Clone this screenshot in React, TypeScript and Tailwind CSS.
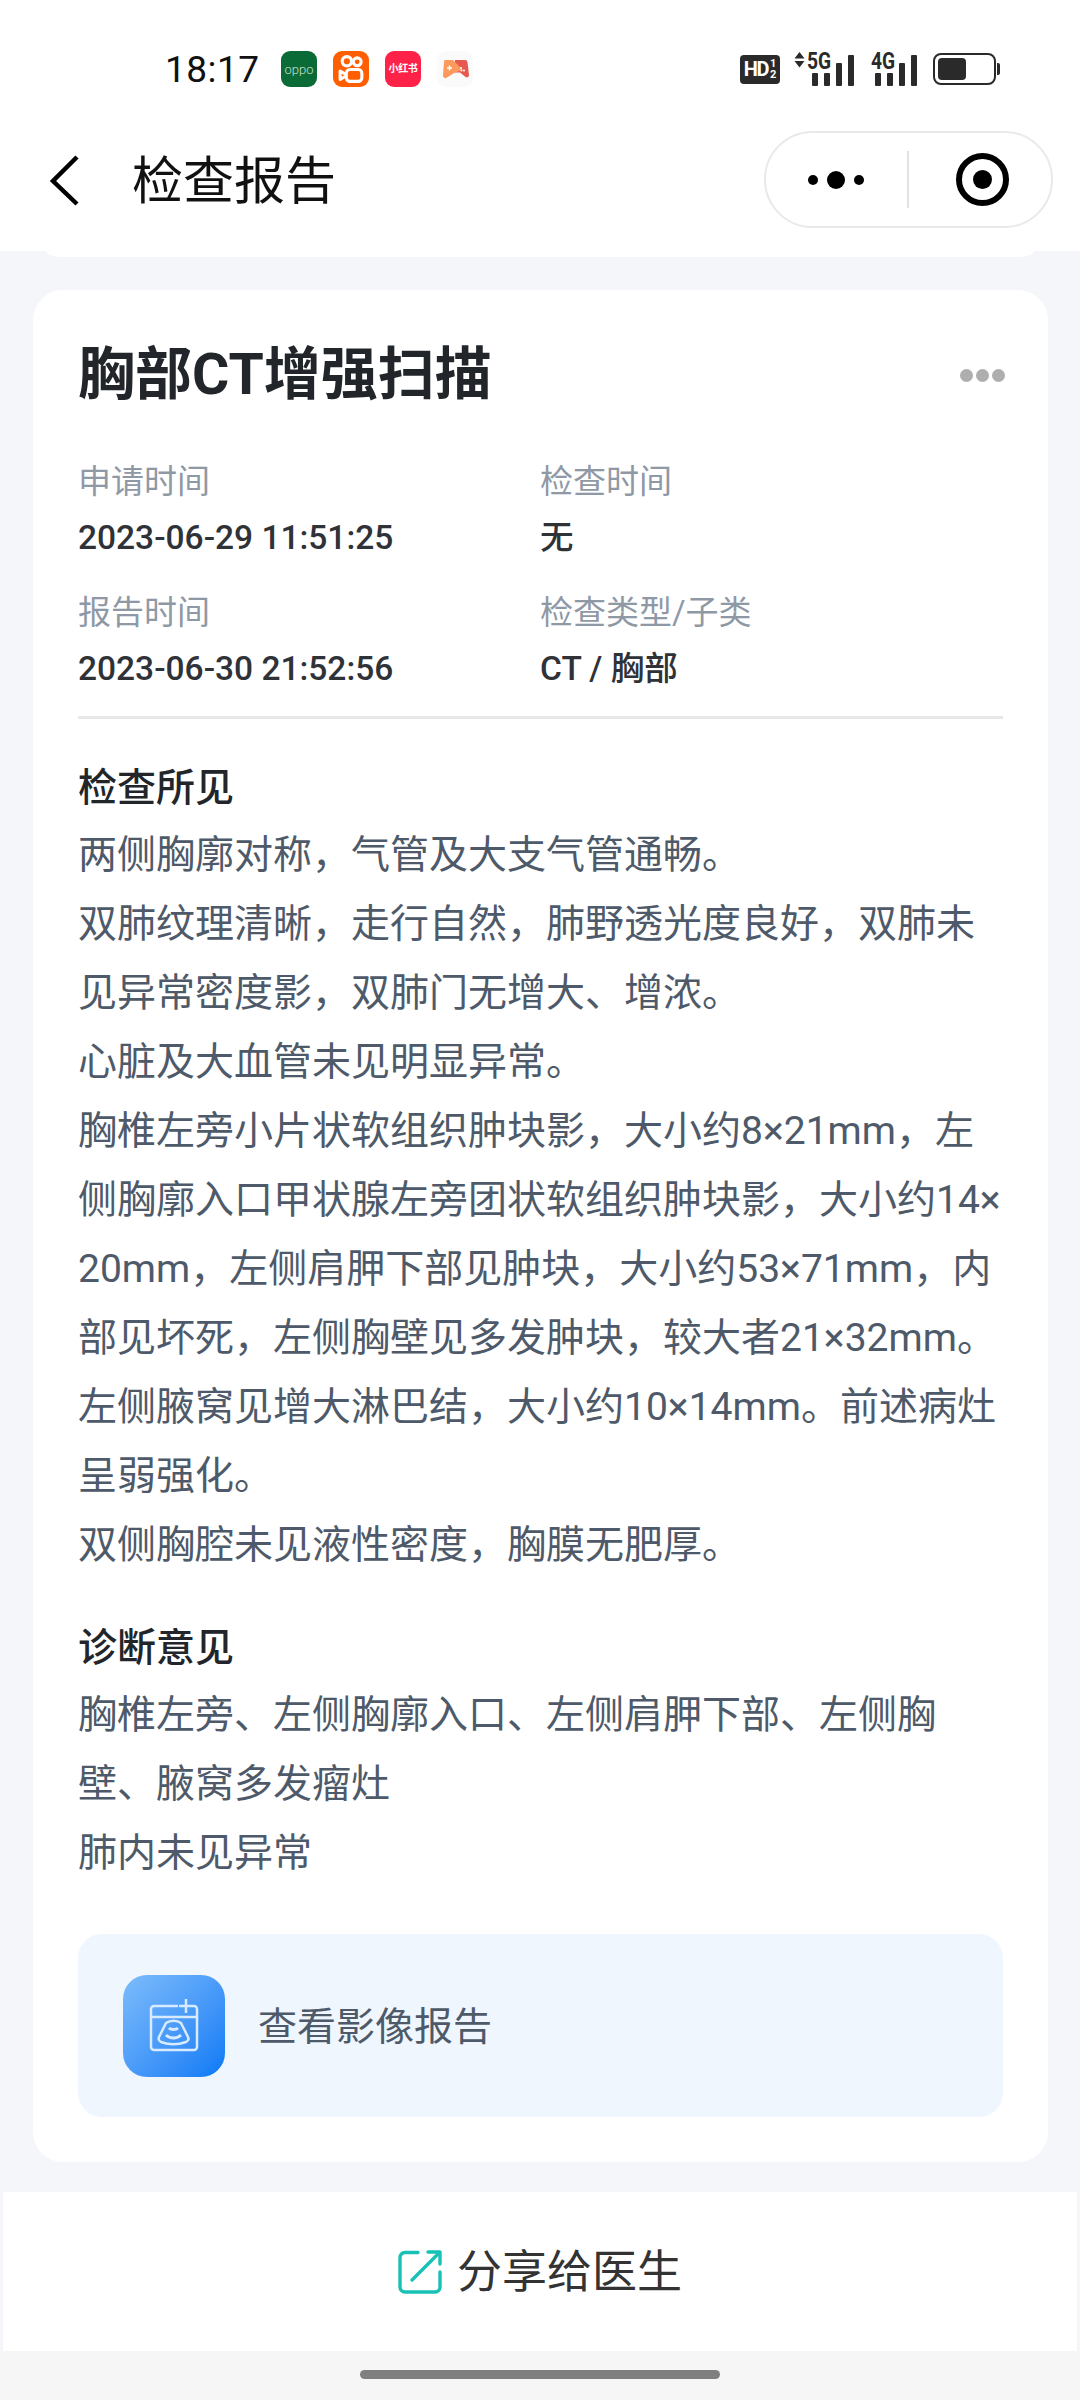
const sans = "font-['Roboto','Noto_Sans_CJK_SC',sans-serif]";

function OppoIcon() {
  return (
    <div className="flex h-[36px] w-[36px] items-center justify-center rounded-[9px] bg-[#0b6b36]">
      <span className="font-['Lato',sans-serif] text-[13px] font-light leading-none text-[#e3f3e8]">oppo</span>
    </div>
  );
}

function KuaishouIcon() {
  return (
    <div className="flex h-[36px] w-[36px] items-center justify-center rounded-[9px] bg-[#ff5f00]">
      <svg width="28" height="30" viewBox="0 0 27 29" fill="none" stroke="#fff" strokeWidth="3">
        <circle cx="9.5" cy="7" r="4.5" />
        <circle cx="19.5" cy="7.5" r="3.8" />
        <rect x="9" y="15" width="15" height="11.5" rx="3.5" />
        <path d="M9 20 3 16.5v8L9 21" strokeLinejoin="round" />
      </svg>
    </div>
  );
}

function RedBookIcon() {
  return (
    <div className="flex h-[36px] w-[36px] items-center justify-center rounded-[9px] bg-[#fe2249]">
      <span className="whitespace-nowrap text-[10px] font-bold leading-none tracking-[-0.4px] text-white">小红书</span>
    </div>
  );
}

function GameIcon() {
  return (
    <div className="flex h-[36px] w-[36px] items-center justify-center rounded-[9px] bg-[#fafafa]">
      <svg width="27" height="20" viewBox="0 0 27 20">
        <path d="M4 1h19a2.500 2.500 0 0 1 2.500 2.200L27 16a2.200 2.200 0 0 1-3.400 2L18 13.500H13V1z" fill="#e5594f" />
        <path d="M3 1h8l10 10-8 2.500-8 5a2.400 2.400 0 0 1-4-2L2 3a2.300 2.300 0 0 1 1-2z" fill="#fb9a5c" />
        <path d="M5 9h5M7.500 6.500v5" stroke="#fff" strokeWidth="1.4" />
        <circle cx="19" cy="9" r="1" fill="#fff" />
        <circle cx="22" cy="11.500" r="1" fill="#fff" />
        <circle cx="19.500" cy="11.500" r="0.9" fill="#fff" />
      </svg>
    </div>
  );
}

function SignalBars({ heights }: { heights: number[] }) {
  return (
    <div className="flex items-end gap-[6px]">
      {heights.map((h, i) => (
        <div key={i} className="w-[6px] rounded-[1px] bg-[#2a2a2a]" style={{ height: h }} />
      ))}
    </div>
  );
}

function StatusBar() {
  return (
    <div className="flex h-[88px] items-end pb-[1px] pl-[165px] pr-[80px]">
      <div className="flex h-[36px] flex-1 items-center">
        <span className="w-[116px] font-['Roboto',sans-serif] text-[37px] leading-none tracking-[0.5px] text-[#111]">18:17</span>
        <div className="flex gap-[16px]">
          <OppoIcon />
          <KuaishouIcon />
          <RedBookIcon />
          <GameIcon />
        </div>
      </div>
      <div className="flex h-[36px] items-center">
        <div className="flex h-[29px] w-[40px] items-center justify-center rounded-[4px] bg-[#2a2a2a] font-['Roboto',sans-serif] text-white">
          <span className="text-[20px] font-bold leading-none tracking-[-1.5px]">HD</span>
          <span className="ml-[2px] flex flex-col text-[11px] font-bold leading-[11px]">
            <span>1</span>
            <span>2</span>
          </span>
        </div>
        <div className="relative ml-[14px] h-[34px] w-[60px]">
          <svg className="absolute left-0 top-0" width="11" height="16" viewBox="0 0 11 16" fill="#2a2a2a">
            <path d="M5.500 0 10.500 6.500H.5zM.5 9h10l-5 6.500z" />
          </svg>
          <span className="absolute left-[13px] top-[-3px] origin-left scale-x-[0.8] font-['Roboto',sans-serif] text-[24px] font-bold leading-[24px] text-[#2a2a2a]">5G</span>
          <div className="absolute bottom-0 right-0">
            <SignalBars heights={[13, 13, 23, 31]} />
          </div>
        </div>
        <div className="relative ml-[17px] h-[34px] w-[46px]">
          <span className="absolute left-0 top-[-3px] origin-left scale-x-[0.8] font-['Roboto',sans-serif] text-[24px] font-bold leading-[24px] text-[#2a2a2a]">4G</span>
          <div className="absolute bottom-0 right-0">
            <SignalBars heights={[13, 13, 23, 31]} />
          </div>
        </div>
        <div className="ml-[16px] flex items-center">
          <div className="h-[32px] w-[63px] rounded-[8px] border-[2px] border-[#2a2a2a] p-[3px]">
            <div className="h-full w-[28px] rounded-[4px] bg-[#2a2a2a]" />
          </div>
          <div className="ml-[1px] h-[12px] w-[3px] rounded-r-[2px] bg-[#2a2a2a]" />
        </div>
      </div>
    </div>
  );
}

function NavBar() {
  return (
    <div className="flex h-[163px] items-start pl-[49px] pr-[27px] pt-[43px]">
      <svg className="mt-[23px]" width="32" height="52" viewBox="0 0 32 52" fill="none" stroke="#000" strokeWidth="4.500">
        <path d="M28 3 4 27l24 23" />
      </svg>
      <h1 className={`ml-[51px] mt-[18px] text-[51px] font-normal leading-[66px] text-[#111] ${sans}`}>检查报告</h1>
      <div className="ml-auto flex h-[97px] w-[289px] items-center rounded-full border-[2px] border-[#e9e9e9] bg-white">
        <div className="flex w-[141px] items-center justify-center gap-[9px] pr-[2px]">
          <div className="h-[10px] w-[10px] rounded-full bg-black" />
          <div className="h-[18px] w-[18px] rounded-full bg-black" />
          <div className="h-[10px] w-[10px] rounded-full bg-black" />
        </div>
        <div className="h-[57px] w-[2px] bg-[#e2e2e2]" />
        <div className="flex flex-1 items-center justify-center pl-[4px]">
          <div className="flex h-[53px] w-[53px] items-center justify-center rounded-full border-[6px] border-black">
            <div className="h-[19px] w-[19px] rounded-full bg-black" />
          </div>
        </div>
      </div>
    </div>
  );
}

function InfoCell({ label, value }: { label: string; value: string }) {
  return (
    <div>
      <div className="text-[33px] leading-[44px] text-[#8f99a5]">{label}</div>
      <div className="mt-[12px] h-[44px] text-[33.5px] font-medium leading-[44px] text-[#2f3237]">{value}</div>
    </div>
  );
}

function ScanIcon() {
  return (
    <div className="flex h-[102px] w-[102px] items-center justify-center rounded-[24px] bg-gradient-to-br from-[#7cbcfb] to-[#0079f5]">
      <svg width="50" height="56" viewBox="0 0 50 56" fill="none" stroke="#d8ebfe" strokeWidth="2.500">
        <path d="M29 8H5a3 3 0 0 0-3 3v38a3 3 0 0 0 3 3h40a3 3 0 0 0 3-3V11a3 3 0 0 0-3-3h-1" />
        <path d="M2 19h46" />
        <path d="M37 1v14M30 8h14" />
        <path d="M17 25c4-3 11-3 15 0l7 14c1 2 0 4-2 5-8 3-17 3-25 0-2-1-3-3-2-5z" />
        <path d="M17 37c4 4 11 4 15 0" strokeWidth="3" />
        <path d="M20 30c2 2 7 2 9 0" strokeWidth="3" />
      </svg>
    </div>
  );
}

function ShareIcon() {
  return (
    <svg width="44" height="44" viewBox="0 0 44 44" fill="none" stroke="#18c1b6" strokeWidth="3.400" strokeLinecap="round" strokeLinejoin="round">
      <path d="M20 2.500H7a5 5 0 0 0-5 5V37a5 5 0 0 0 5 5h30a5 5 0 0 0 5-5V22" />
      <path d="M14 30 41 3" />
      <path d="M30 2h12v12" />
    </svg>
  );
}

const findings = [
  "两侧胸廓对称，气管及大支气管通畅。",
  "双肺纹理清晰，走行自然，肺野透光度良好，双肺未见异常密度影，双肺门无增大、增浓。",
  "心脏及大血管未见明显异常。",
  "胸椎左旁小片状软组织肿块影，大小约8×21mm，左侧胸廓入口甲状腺左旁团状软组织肿块影，大小约14×20mm，左侧肩胛下部见肿块，大小约53×71mm，内部见坏死，左侧胸壁见多发肿块，较大者21×32mm。左侧腋窝见增大淋巴结，大小约10×14mm。前述病灶呈弱强化。",
  "双侧胸腔未见液性密度，胸膜无肥厚。",
];

const diagnosis = ["胸椎左旁、左侧胸廓入口、左侧肩胛下部、左侧胸壁、腋窝多发瘤灶", "肺内未见异常"];

function Section({ title, lines }: { title: string; lines: string[] }) {
  return (
    <section>
      <h2 className="text-[39px] font-medium leading-[50px] text-[#22262b]">{title}</h2>
      <div className="mt-[8px] break-all text-[39px] leading-[69px] text-[#4e5a69]">
        {lines.map((line) => (
          <p key={line}>{line}</p>
        ))}
      </div>
    </section>
  );
}

export default function App() {
  return (
    <div className={`flex h-[2400px] w-[1080px] flex-col overflow-hidden bg-[#f4f6fa] ${sans}`}>
      <header>
        <div className="bg-white">
          <StatusBar />
          <NavBar />
        </div>
        <div className="mx-[46px] h-[6px] rounded-b-[16px_6px] bg-white" />
      </header>

      <main className="ml-[33px] mr-[32px] mt-[33px] h-[1872px] rounded-[30px] bg-white px-[45px]">
        <div className="flex items-center justify-between pt-[49px]">
          <h2 className="text-[57px] font-bold leading-[72px] text-[#22262b]">胸部CT增强扫描</h2>
          <div className="mr-[-2px] flex gap-[3px]">
            <div className="h-[13px] w-[13px] rounded-full bg-[#aeaeae]" />
            <div className="h-[13px] w-[13px] rounded-full bg-[#aeaeae]" />
            <div className="h-[13px] w-[13px] rounded-full bg-[#aeaeae]" />
          </div>
        </div>

        <div className="mt-[49px] grid grid-cols-[462px_1fr] gap-y-[31px]">
          <InfoCell label="申请时间" value="2023-06-29 11:51:25" />
          <InfoCell label="检查时间" value="无" />
          <InfoCell label="报告时间" value="2023-06-30 21:52:56" />
          <InfoCell label="检查类型/子类" value="CT / 胸部" />
        </div>

        <div className="mt-[25px] h-[3px] bg-[#e7e8ea]" />

        <div className="mt-[44px]">
          <Section title="检查所见" lines={findings} />
        </div>
        <div className="mt-[43px]">
          <Section title="诊断意见" lines={diagnosis} />
        </div>

        <div className="mt-[46px] flex h-[183px] items-center gap-[33px] rounded-[24px] bg-[#eff6fe] pl-[45px]">
          <ScanIcon />
          <span className="pt-[3px] text-[39px] leading-[50px] text-[#4e5a69]">查看影像报告</span>
        </div>
      </main>

      <div className="mx-[3px] mt-[30px] flex h-[159px] items-center justify-center gap-[15px] bg-white">
        <ShareIcon />
        <span className="pt-[2px] text-[45px] leading-[56px] text-[#333]">分享给医生</span>
      </div>

      <div className="flex flex-1 justify-center bg-[#f6f6f6] pt-[19px]">
        <div className="h-[9px] w-[360px] rounded-full bg-[#7f7f7f]" />
      </div>
    </div>
  );
}
